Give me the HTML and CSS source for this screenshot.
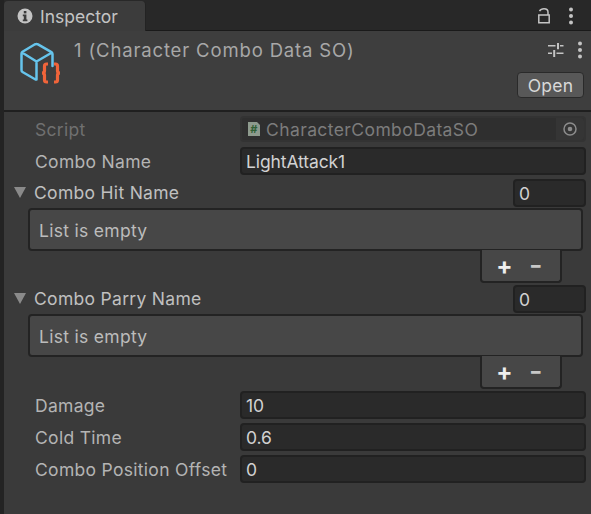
FILE: index.html
```html
<!DOCTYPE html>
<html lang="en">
<head>
<meta charset="utf-8">
<title>Inspector</title>
<link rel="stylesheet" href="styles.css">
</head>
<body>
<div class="window">
  <div class="tabbar">
    <div class="tab">
      <svg class="info" width="16" height="16" viewBox="0 0 16 16"><circle cx="8" cy="8" r="7.5" fill="#c4c4c4"/><rect x="6.800" y="3" width="2.600" height="2.400" fill="#3c3c3c"/><path d="M5.800 6.600h3.600v5h1v1.600H5.800v-1.600h1v-3.400h-1z" fill="#3c3c3c"/></svg>
      <span>Inspector</span>
    </div>
    <div class="tabtools">
      <svg width="13" height="16" viewBox="0 0 13 16"><path d="M.8 7h10.400v7.800H.8z" fill="none" stroke="#c4c4c4" stroke-width="1.500"/><path d="M1.500 3.200C2.500 1.400 4 .8 6 .8s4 1 4 3.400V7" fill="none" stroke="#c4c4c4" stroke-width="1.500"/></svg>
      <svg width="6" height="18" viewBox="0 0 6 18"><circle cx="3" cy="2.500" r="2" fill="#c4c4c4"/><circle cx="3" cy="9" r="2" fill="#c4c4c4"/><circle cx="3" cy="15.500" r="2" fill="#c4c4c4"/></svg>
    </div>
  </div>
  <div class="header">
    <svg class="asset" width="44" height="44" viewBox="0 0 44 44">
      <path d="M16 2.300 Q17.500 1.500 19 2.300 L32 9.800 Q33.500 10.700 33.500 12 V24 M16 2.300 L3.500 9.800 Q2.500 10.500 2.500 12 V28 Q2.500 29.500 3.500 30 L16.500 37.500 M3 10.500 L17.500 19.500 L33 10.500 M17.500 19.500 V37.500" fill="none" stroke="#66c4ec" stroke-width="2.500" stroke-linejoin="round" stroke-linecap="round"/>
      <path d="M29 22 H27.500 Q25.500 22 25.500 24 V29 Q25.500 31 23 31 Q25.500 31 25.500 33 V38 Q25.500 40 27.500 40 H29" fill="none" stroke="#f0643a" stroke-width="3.200"/>
      <path d="M35 22 H36.500 Q38.500 22 38.500 24 V29 Q38.500 31 41 31 Q38.500 31 38.500 33 V38 Q38.500 40 36.500 40 H35" fill="none" stroke="#f0643a" stroke-width="3.200"/>
    </svg>
    <div class="title">1 (Character Combo Data SO)</div>
    <div class="header-side">
      <div class="header-tools">
        <svg width="16" height="14" viewBox="0 0 16 14"><path d="M0 2.800h7.500M12 2.800h3.500M0 10.300h4M8.500 10.300h7" stroke="#c4c4c4" stroke-width="1.400"/><path d="M10 0v6.200M6.200 7v7" stroke="#c4c4c4" stroke-width="2"/></svg>
        <svg width="6" height="18" viewBox="0 0 6 18"><circle cx="3" cy="2.500" r="2" fill="#c4c4c4"/><circle cx="3" cy="9" r="2" fill="#c4c4c4"/><circle cx="3" cy="15.500" r="2" fill="#c4c4c4"/></svg>
      </div>
      <div class="open">Open</div>
    </div>
  </div>
  <div class="content">
    <div class="row script">
      <span class="label dim">Script</span>
      <div class="field objfield">
        <svg width="14" height="16" viewBox="0 0 14 16"><path d="M1 1h9l3 3v11H1z" fill="#8d9a8d"/><text x="7" y="12" class="hash">#</text></svg>
        <span class="objname">CharacterComboDataSO</span>
        <span class="picker"><svg width="16" height="16" viewBox="0 0 16 16"><circle cx="8" cy="8" r="6" fill="none" stroke="#8c8c8c" stroke-width="1.500"/><circle cx="8" cy="8" r="2.300" fill="#8c8c8c"/></svg></span>
      </div>
    </div>
    <div class="row">
      <span class="label">Combo Name</span>
      <div class="field">LightAttack1</div>
    </div>
    <div class="row listhead">
      <span class="foldout"></span>
      <span class="listname">Combo Hit Name</span>
      <div class="field count">0</div>
    </div>
    <div class="listbox">List is empty</div>
    <div class="listfoot"><span class="plus">+</span><span class="minus">–</span></div>
    <div class="row listhead second">
      <span class="foldout"></span>
      <span class="listname">Combo Parry Name</span>
      <div class="field count">0</div>
    </div>
    <div class="listbox">List is empty</div>
    <div class="listfoot"><span class="plus">+</span><span class="minus">–</span></div>
    <div class="row after">
      <span class="label">Damage</span>
      <div class="field">10</div>
    </div>
    <div class="row">
      <span class="label">Cold Time</span>
      <div class="field">0.6</div>
    </div>
    <div class="row">
      <span class="label">Combo Position Offset</span>
      <div class="field">0</div>
    </div>
  </div>
</div>
</body>
</html>
```
FILE: styles.css
```css
* { box-sizing: border-box; }
html, body { margin: 0; padding: 0; }
body { width: 591px; height: 514px; overflow: hidden; background: #232323; font-family: Inter, "Liberation Sans", sans-serif; font-size: 17.5px; color: #c4c4c4; }
.window { display: flex; flex-direction: column; height: 514px; padding-left: 4px; }
.tabbar { height: 31px; flex: none; display: flex; justify-content: space-between; background: #282828; border-bottom: 1px solid #1a1a1a; }
.tab { width: 142px; margin-top: 1px; height: 30px; background: #3c3c3c; border-radius: 4px 4px 0 0; border-right: 1px solid #232323; display: flex; align-items: center; gap: 7px; padding-left: 13px; margin-bottom: -1px; }
.tabtools { display: flex; align-items: center; gap: 17px; padding-right: 17px; padding-top: 1px; }
.header { height: 81px; flex: none; background: #3e3e3e; border-bottom: 2px solid #1f1f1f; display: flex; position: relative; padding: 11px 7px 0 15px; }
.asset { flex: none; }
.title { margin-left: 11px; margin-top: -3px; color: #a8a8a8; font-size: 18.500px; letter-spacing: .85px; flex: 1; }
.header-side { display: flex; flex-direction: column; align-items: flex-end; gap: 13px; }
.header-tools { display: flex; align-items: center; gap: 13px; padding-right: 1px; height: 18px; margin-top: -1px; }
.open { width: 67px; height: 26px; background: #585858; border: 1px solid #2a2a2a; border-radius: 4px; display: flex; align-items: center; justify-content: center; color: #d8d8d8; font-size: 17.5px; letter-spacing: .2px; }
.content { flex: 1; background: #3a3a3a; padding: 4px 5px 0 24px; display: flex; flex-direction: column; letter-spacing: .3px; }
.row { display: flex; align-items: center; height: 28px; margin-bottom: 4px; }
.row.script { height: 26px; margin-bottom: 5px; }
.label { width: 212px; padding-left: 7px; flex: none; color: #b4b4b4; padding-top: 1px; }
.label.dim { color: #707070; }
.field { flex: 1; height: 100%; background: #2a2a2a; border: 2px solid #212121; border-radius: 4px; padding-left: 4px; display: flex; align-items: center; color: #d2d2d2; padding-top: 1px; letter-spacing: -.1px; }
.objfield { background: #2f2f2f; border-color: #333; padding-left: 5px; padding-top: 0; gap: 5px; color: #7c7c7c; position: relative; letter-spacing: .4px; }
.objname { flex: 1; }
.picker { width: 28px; height: 100%; display: flex; align-items: center; justify-content: center; background: #353535; border-radius: 0 3px 3px 0; }
.hash { font-size: 11px; font-weight: 700; fill: #2f5f35; text-anchor: middle; }
.listhead { margin-bottom: 1px; }
.foldout { width: 0; height: 0; flex: none; margin-left: -14px; border-left: 6px solid transparent; border-right: 6px solid transparent; border-top: 11px solid #8a8a8a; margin-bottom: 2px; }
.listname { margin-left: 8px; flex: 1; margin-bottom: 1px; color: #c0c0c0; }
.count { flex: none; width: 73px; }
.listbox { margin-right: 3px; height: 43px; background: #474747; border: 2px solid #232323; border-radius: 4px; padding-left: 9px; display: flex; align-items: center; color: #bcbcbc; padding-top: 1px; }
.listfoot { align-self: flex-end; margin-right: 24px; margin-top: -1px; width: 82px; height: 33px; background: #474747; border: 2px solid #232323; border-top: 0; border-radius: 0 0 4px 4px; display: flex; align-items: center; justify-content: center; gap: 18px; color: #eee; font-weight: 700; font-size: 24px; padding-right: 5px; }
.plus, .minus { line-height: 1; }
.minus { color: #c8c8c8; font-size: 19px; font-weight: 900; }
.second { margin-top: 2px; }
.after { margin-top: 2px; }
```
